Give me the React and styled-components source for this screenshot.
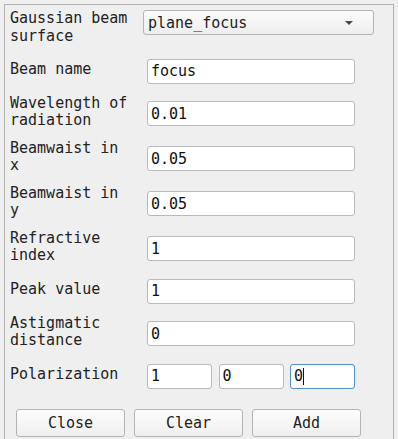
import React from "react";
import styled, { createGlobalStyle } from "styled-components";

const GlobalStyle = createGlobalStyle`
  html, body {
    margin: 0;
    padding: 0;
    background: #efefef;
    overflow: hidden;
  }
  body {
    font-family: "DejaVu Sans Mono", "Liberation Mono", monospace;
    font-size: 15px;
    color: #222;
  }
`;

const Frame = styled.div`
  margin: 4px 0 0 4px;
  width: 390px;
  height: calc(100vh - 4px);
  border: 1px solid #b2b2b2;
  border-bottom: none;
  padding: 0 0 0 5px;
  box-sizing: border-box;
`;

const TopRow = styled.div`
  display: flex;
  align-items: flex-start;
  gap: 11px;
  margin-bottom: 16px;
`;

const Form = styled.div`
  display: flex;
  flex-direction: column;
  gap: 10px;
`;

const Row = styled.div`
  display: flex;
  align-items: center;
  min-height: 30px;
  gap: 15px;
`;

/* $shift moves the text without changing the row's height */
const Label = styled.div`
  width: 122px;
  line-height: 17.5px;
  flex-shrink: 0;
  margin-top: ${(p) => p.$shift}px;
  margin-bottom: ${(p) => -p.$shift}px;
`;

const Combo = styled.div`
  margin-top: 5px;
  width: 231px;
  height: 25px;
  box-sizing: border-box;
  border: 1px solid #b4b4b4;
  border-radius: 3px;
  background: linear-gradient(#fbfbfb, #eeeeee);
  display: flex;
  align-items: center;
  justify-content: space-between;
  padding: 0 20px 0 4px;
  color: #1e1e1e;
`;

const Arrow = styled.span`
  width: 0;
  height: 0;
  border-left: 4px solid transparent;
  border-right: 4px solid transparent;
  border-top: 4px solid #4a4a4a;
`;

const Field = styled.div`
  width: ${(p) => p.$width || 208}px;
  height: 25px;
  box-sizing: border-box;
  background: #fff;
  border: 1px solid ${(p) => (p.$focused ? "#4f8fcf" : "#bababa")};
  border-radius: 3px;
  display: flex;
  align-items: center;
  padding-left: 3px;
  color: #111;
  white-space: pre;
`;

const Caret = styled.span`
  display: inline-block;
  width: 1px;
  height: 17px;
  background: #111;
`;

const Triple = styled.div`
  display: flex;
  gap: 6.5px;
`;

const Buttons = styled.div`
  display: flex;
  gap: 9px;
  margin: 18px 0 0 6px;
`;

const Button = styled.button`
  width: 109px;
  height: 28px;
  box-sizing: border-box;
  border: 1px solid #b4b4b4;
  border-radius: 3px;
  background: linear-gradient(#fdfdfd, #efefef);
  font-family: inherit;
  font-size: 15px;
  color: #222;
  padding: 0;
`;

const rows = [
  ["Beam name", "focus"],
  ["Wavelength of radiation", "0.01"],
  ["Beamwaist in x", "0.05"],
  ["Beamwaist in y", "0.05"],
  ["Refractive index", "1"],
  ["Peak value", "1"],
  ["Astigmatic distance", "0"],
];

export default function App() {
  return (
    <>
      <GlobalStyle />
      <Frame>
        <TopRow>
          <Label $shift={5}>Gaussian beam surface</Label>
          <Combo>
            <span>plane_focus</span>
            <Arrow />
          </Combo>
        </TopRow>
        <Form>
          {rows.map(([label, value]) => (
            <Row key={label}>
              <Label $shift={-1.5}>{label}</Label>
              <Field>{value}</Field>
            </Row>
          ))}
          <Row>
            <Label $shift={-1.5}>Polarization</Label>
            <Triple>
              <Field $width={65}>1</Field>
              <Field $width={65}>0</Field>
              <Field $width={65} $focused>
                0<Caret />
              </Field>
            </Triple>
          </Row>
        </Form>
        <Buttons>
          <Button>Close</Button>
          <Button>Clear</Button>
          <Button>Add</Button>
        </Buttons>
      </Frame>
    </>
  );
}
